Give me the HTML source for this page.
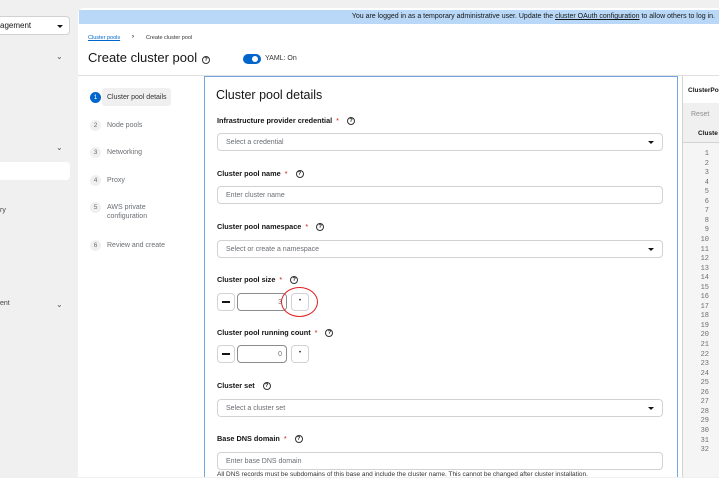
<!DOCTYPE html>
<html><head><meta charset="utf-8"><style>
*{box-sizing:border-box;margin:0;padding:0}
body{width:719px;height:477px;overflow:hidden;background:#f0f0f0;font-family:"Liberation Sans",sans-serif;color:#151515;position:relative}
.abs{position:absolute}
.t{font-size:7px;color:#151515}
.lbl{position:absolute;left:217px;font-size:7.3px;font-weight:bold;color:#151515}
.req{color:#c9190b;font-weight:normal;margin-left:4px}
.q{display:inline-block;width:8px;height:8px;border:1px solid #333;border-radius:50%;font-size:5.5px;line-height:6px;text-align:center;margin-left:8px;vertical-align:middle;font-weight:bold}
.inp{position:absolute;left:217px;width:446px;height:18px;border:1px solid #d2d2d2;border-radius:4px;background:#fff;font-size:7px;color:#6a6e73;padding:5px 8px}
.caret{position:absolute;right:8px;top:7px;width:0;height:0;border-left:3px solid transparent;border-right:3px solid transparent;border-top:3px solid #151515}
.btn{position:absolute;width:18px;height:18px;border:1px solid #d2d2d2;border-radius:4px;background:#fff}
.num{position:absolute;width:50px;height:18px;border:1px solid #8a8d90;border-radius:4px;background:#fff;font-size:7px;color:#6a6e73;text-align:right;padding:5px 4px}
.step{position:absolute;left:90px;font-size:7px;color:#6a6e73}
.sn{display:inline-block;width:11px;height:11px;border-radius:50%;background:#f0f0f0;text-align:center;line-height:11px;margin-right:6px;font-size:6.5px;color:#6a6e73}
.ln{position:absolute;right:5px;font-family:"Liberation Mono",monospace;font-size:7px;color:#6a6e73;text-align:right}
</style></head><body>
<div class="abs" style="left:0;top:16px;width:70px;height:19px;background:#fff;border:1px solid #d2d2d2;border-left:none;border-radius:0 4px 4px 0;font-size:8px;padding:4px 0 0 0">agement<span class="abs" style="left:57px;top:8px;border-left:3px solid transparent;border-right:3px solid transparent;border-top:3px solid #151515"></span></div>
<div class="abs" style="left:56px;top:52px;font-size:8px;color:#555">⌄</div>
<div class="abs" style="left:56px;top:143px;font-size:8px;color:#555">⌄</div>
<div class="abs" style="left:0;top:162px;width:70px;height:18px;background:#fff;border-radius:0 4px 4px 0"></div>
<div class="abs t" style="left:0;top:207px;color:#444">ry</div>
<div class="abs t" style="left:0;top:300px;color:#444">ent</div>
<div class="abs" style="left:56px;top:300px;font-size:8px;color:#555">⌄</div>
<div class="abs" style="left:78px;top:8px;width:641px;height:469px;background:#fff;border-radius:6px 0 0 0"></div>
<div class="abs" style="left:79px;top:10px;width:640px;height:14px;background:#b9d8f7;font-size:7px;color:#151515;padding:3px 0 0 0;text-align:right;padding-right:4px">You are logged in as a temporary administrative user. Update the <u>cluster OAuth configuration</u> to allow others to log in.</div>
<div class="abs" style="left:88px;top:35px;font-size:5.5px;color:#0066cc;text-decoration:underline">Cluster pools</div>
<div class="abs" style="left:132px;top:34px;font-size:6px;font-weight:bold">›</div>
<div class="abs" style="left:146px;top:35px;font-size:5.5px;color:#333">Create cluster pool</div>
<div class="abs" style="left:88px;top:50px;font-size:13px;color:#151515">Create cluster pool</div>
<span class="q abs" style="left:202px;top:56px;margin:0">?</span>
<div class="abs" style="left:243px;top:54px;width:18px;height:10px;border-radius:5px;background:#0066cc"><div class="abs" style="left:9px;top:2px;width:6px;height:6px;border-radius:50%;background:#fff"></div></div>
<div class="abs" style="left:265px;top:55px;font-size:7px;color:#333">YAML: On</div>
<div class="abs" style="left:78px;top:75px;width:641px;height:1px;background:#e0e0e0"></div>
<div class="abs" style="left:102px;top:88px;width:69px;height:18px;background:#f0f0f0;border-radius:3px"></div>
<div class="step" style="top:92px;color:#333"><span class="sn" style="background:#0066cc;color:#fff">1</span>Cluster pool details</div>
<div class="step" style="top:120px"><span class="sn">2</span>Node pools</div>
<div class="step" style="top:147px"><span class="sn">3</span>Networking</div>
<div class="step" style="top:175px"><span class="sn">4</span>Proxy</div>
<div class="step" style="top:202px"><span class="sn">5</span>AWS private</div>
<div class="step" style="top:213px;left:107px">configuration</div>
<div class="step" style="top:240px"><span class="sn">6</span>Review and create</div>
<div class="abs" style="left:204px;top:76px;width:474px;height:401px;border:1px solid #73a5e0;border-bottom:none"></div>
<div class="abs" style="left:216px;top:88px;font-size:12.5px">Cluster pool details</div>
<div class="lbl" style="top:116px">Infrastructure provider credential<span class="req">*</span><span class="q">?</span></div>
<div class="inp" style="top:133px">Select a credential<span class="caret"></span></div>
<div class="lbl" style="top:169px">Cluster pool name<span class="req">*</span><span class="q">?</span></div>
<div class="inp" style="top:186px">Enter cluster name</div>
<div class="lbl" style="top:222px">Cluster pool namespace<span class="req">*</span><span class="q">?</span></div>
<div class="inp" style="top:240px">Select or create a namespace<span class="caret"></span></div>
<div class="lbl" style="top:275px">Cluster pool size<span class="req">*</span><span class="q">?</span></div>
<div class="btn" style="left:217px;top:293px"><div class="abs" style="left:4px;top:7px;width:8px;height:2px;background:#151515"></div></div>
<div class="num" style="left:237px;top:293px">3</div>
<div class="btn" style="left:291px;top:293px;font-size:6px;text-align:center;line-height:14px">•</div>
<div class="abs" style="left:281px;top:287px;width:37px;height:30px;border:1.5px solid #e02020;border-radius:50%"></div>
<div class="lbl" style="top:328px">Cluster pool running count<span class="req">*</span><span class="q">?</span></div>
<div class="btn" style="left:217px;top:345px"><div class="abs" style="left:4px;top:7px;width:8px;height:2px;background:#151515"></div></div>
<div class="num" style="left:237px;top:345px">0</div>
<div class="btn" style="left:291px;top:345px;font-size:6px;text-align:center;line-height:14px">•</div>
<div class="lbl" style="top:381px">Cluster set<span class="q">?</span></div>
<div class="inp" style="top:399px">Select a cluster set<span class="caret"></span></div>
<div class="lbl" style="top:434px">Base DNS domain<span class="req">*</span><span class="q">?</span></div>
<div class="inp" style="top:452px">Enter base DNS domain</div>
<div class="abs" style="left:217px;top:471px;font-size:6.5px;color:#333;white-space:nowrap">All DNS records must be subdomains of this base and include the cluster name. This cannot be changed after cluster installation.</div>
<div class="abs" style="left:682px;top:76px;width:37px;height:401px;background:#fff;border-left:1px solid #d2d2d2"></div>
<div class="abs" style="left:688px;top:87px;font-size:6.5px;font-weight:bold;white-space:nowrap">ClusterPo</div>
<div class="abs" style="left:683px;top:103px;width:36px;height:24px;background:#f0f0f0"></div>
<div class="abs" style="left:691px;top:111px;font-size:7px;color:#8a8d90">Reset</div>
<div class="abs" style="left:683px;top:127px;width:36px;height:16px;background:#f0f0f0;border-bottom:1px solid #d2d2d2"></div>
<div class="abs" style="left:698px;top:130px;font-size:6.5px;font-weight:bold;white-space:nowrap">Cluste</div>
<div class="abs" style="left:683px;top:143px;width:36px;height:334px;background:#f5f5f5"></div>
<div class="abs" style="left:683px;top:150px;width:31px">
<div class="ln" style="top:0px">1</div><div class="ln" style="top:9.55px">2</div><div class="ln" style="top:19.1px">3</div><div class="ln" style="top:28.65px">4</div><div class="ln" style="top:38.2px">5</div><div class="ln" style="top:47.75px">6</div><div class="ln" style="top:57.3px">7</div><div class="ln" style="top:66.85px">8</div><div class="ln" style="top:76.4px">9</div><div class="ln" style="top:85.95px">10</div><div class="ln" style="top:95.5px">11</div><div class="ln" style="top:105.05px">12</div><div class="ln" style="top:114.6px">13</div><div class="ln" style="top:124.15px">14</div><div class="ln" style="top:133.7px">15</div><div class="ln" style="top:143.25px">16</div><div class="ln" style="top:152.8px">17</div><div class="ln" style="top:162.35px">18</div><div class="ln" style="top:171.9px">19</div><div class="ln" style="top:181.45px">20</div><div class="ln" style="top:191px">21</div><div class="ln" style="top:200.55px">22</div><div class="ln" style="top:210.1px">23</div><div class="ln" style="top:219.65px">24</div><div class="ln" style="top:229.2px">25</div><div class="ln" style="top:238.75px">26</div><div class="ln" style="top:248.3px">27</div><div class="ln" style="top:257.85px">28</div><div class="ln" style="top:267.4px">29</div><div class="ln" style="top:276.95px">30</div><div class="ln" style="top:286.5px">31</div><div class="ln" style="top:296.05px">32</div>
</div>
</body></html>
